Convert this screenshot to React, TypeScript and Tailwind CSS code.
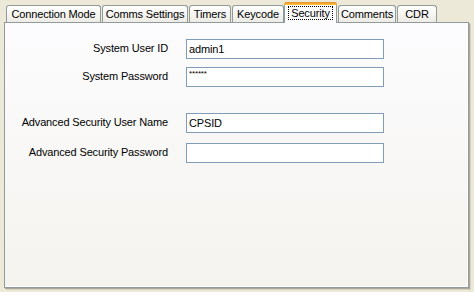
import React from 'react';

const tabs = [
  { label: 'Connection Mode', cls: 'ml-[6px] w-[95px]' },
  { label: 'Comms Settings', cls: 'ml-[1px] w-[86px]' },
  { label: 'Timers', cls: 'ml-[1px] w-[42px]' },
  { label: 'Keycode', cls: 'ml-[1px] w-[52px]' },
  { label: 'Security', cls: 'w-[53px]', active: true },
  { label: 'Comments', cls: 'ml-[1px] w-[58px]' },
  { label: 'CDR', cls: 'ml-[1px] w-[40px]' },
];

const Field: React.FC<{ label: string; value?: string; password?: boolean; cls?: string }> = ({
  label,
  value,
  password,
  cls = '',
}) => (
  <div className={`flex items-center ${cls}`}>
    <div className="w-[163px] pb-[2px] text-right">{label}</div>
    <div
      className={`ml-[18px] flex h-[20px] w-[198px] border border-[#7f9db9] bg-white pl-[2px] ${
        password ? 'items-start pt-[1px] text-[8px] leading-[9px]' : 'items-center'
      }`}
    >
      {value}
    </div>
  </div>
);

const App: React.FC = () => {
  return (
    <div
      className="h-[292px] w-[474px] overflow-hidden bg-[#ece9d8] pt-[2px] text-[11px] tracking-[-0.15px] text-black"
      style={{ fontFamily: '"Liberation Sans", Arial, sans-serif' }}
    >
      {/* Tab strip */}
      <div className="relative z-10 flex h-[21px] items-end">
        {tabs.map((t) =>
          t.active ? (
            <div
              key={t.label}
              className={`flex h-[21px] flex-col rounded-t-[3px] border-x border-[#919b9c] bg-[#fcfcfe] ${t.cls}`}
            >
              <div className="-mx-[1px] h-[3px] rounded-t-[3px] bg-linear-to-b from-[#e68b2c] to-[#ffc73c]" />
              <div className="flex flex-1 items-start justify-center pt-[1px]">
                <span className="border border-dotted border-black px-[2px] leading-[12px]">{t.label}</span>
              </div>
            </div>
          ) : (
            <div
              key={t.label}
              className={`mb-[1px] flex h-[17px] items-center justify-center rounded-t-[3px] border border-b-0 border-[#919b9c] bg-linear-to-b from-white to-[#ecebe5] pt-[1px] ${t.cls}`}
            >
              {t.label}
            </div>
          )
        )}
      </div>

      {/* Panel */}
      <div className="-mt-[1px] ml-[4px] h-[266px] w-[465px] border border-[#919b9c] bg-linear-to-b from-[#fcfcfe] to-[#f4f3ee] pt-[16px] shadow-[inset_-1px_-1px_0_#ffffff,1px_1px_0_#aca899,2px_2px_0_#d6d3c4]">
        <Field label="System User ID" value="admin1" />
        <Field label="System Password" value="******" password cls="mt-[8px]" />
        <Field label="Advanced Security User Name" value="CPSID" cls="mt-[26px]" />
        <Field label="Advanced Security Password" cls="mt-[10px]" />
      </div>
    </div>
  );
};

export default App;
